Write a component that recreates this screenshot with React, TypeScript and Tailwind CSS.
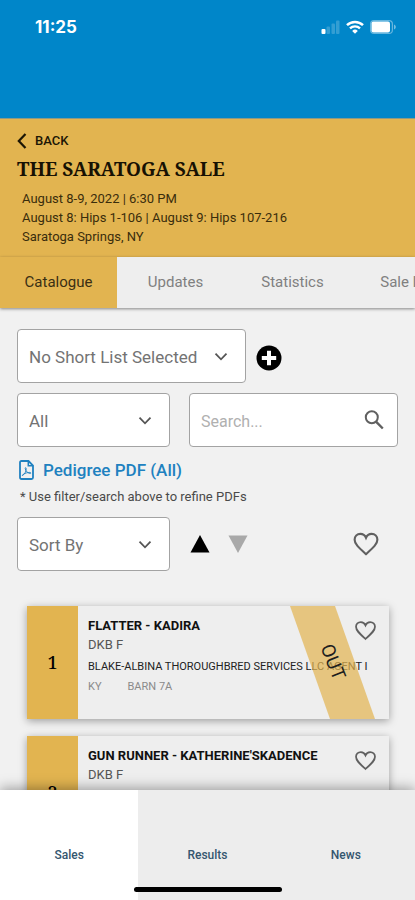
import type { ReactNode } from "react";

function Chevron() {
  return (
    <svg viewBox="0 0 14 14" aria-hidden="true" className="pointer-events-none absolute right-[17px] top-1/2 size-[14px] -translate-y-1/2">
      <path d="M1.500 4.700 7 10.300l5.500-5.600" fill="none" stroke="#555" strokeWidth="1.800" />
    </svg>
  );
}

function Heart({ className }: { className: string }) {
  return (
    <svg viewBox="0 0 24 24" aria-hidden="true" className={className}>
      <path
        fill="none"
        stroke="#606060"
        strokeWidth="1.700"
        d="M12 20.100C6.300 15 2.900 12.100 2.900 8.500 2.900 5.900 4.900 3.900 7.500 3.900c1.900 0 3.700 1.200 4.500 3.100.8-1.900 2.600-3.100 4.500-3.100 2.600 0 4.600 2 4.600 4.600 0 3.600-3.400 6.500-9.100 11.600z"
      />
    </svg>
  );
}

function SelectBox({ label, text, className }: { label: string; text: string; className: string }) {
  return (
    <div className={`relative h-[54px] rounded-[4px] border border-[#a3a3a3] bg-white ${className}`}>
      <select aria-label={label} className="h-full w-full appearance-none rounded-[4px] bg-transparent pl-[11px] pr-9 pt-[3px] text-[17px] text-[#737373] outline-none">
        <option>{text}</option>
      </select>
      <Chevron />
    </div>
  );
}

function StatusBar() {
  return (
    <div className="flex items-center justify-between pl-[35px] pr-[19px] pt-[17px] text-white">
      <span className="font-['Inter'] text-[17px] font-bold leading-5">11:25</span>
      <div className="flex items-center gap-[6px]">
        <svg viewBox="0 0 19 14" className="h-[14px] w-[19px]" aria-hidden="true">
          <rect x="0.500" y="9" width="4" height="5" rx="1" fill="#fff" />
          <rect x="5.500" y="6.500" width="3.500" height="7.500" rx="1" fill="#fff" opacity=".2" />
          <rect x="10.500" y="3.500" width="3.500" height="10.500" rx="1" fill="#fff" opacity=".2" />
          <rect x="15" y="0.500" width="3.500" height="13.500" rx="1" fill="#fff" opacity=".2" />
        </svg>
        <svg viewBox="0 0 18 14" className="h-[14px] w-[18px]" aria-hidden="true" fill="none" stroke="#fff">
          <path d="M1 5.200a11.400 11.400 0 0 1 16 0" strokeWidth="2.500" />
          <path d="M4 8.400a7.100 7.100 0 0 1 10 0" strokeWidth="2.300" />
          <path d="M9 13.800 6.200 10.900a4 4 0 0 1 5.600 0z" fill="#fff" stroke="none" />
        </svg>
        <svg viewBox="0 0 26 14" className="h-[14px] w-[26px]" aria-hidden="true">
          <rect x="0.600" y="0.600" width="21.800" height="12.800" rx="3.500" fill="none" stroke="#fff" strokeOpacity=".4" strokeWidth="1.200" />
          <rect x="1.500" y="1.500" width="18.500" height="11" rx="2" fill="#fff" />
          <path d="M24 4.500c1.200.5 1.800 1.500 1.800 2.500s-.6 2-1.800 2.500z" fill="#fff" opacity=".45" />
        </svg>
      </div>
    </div>
  );
}

const tabs = ["Catalogue", "Updates", "Statistics", "Sale Info"];

function Horse({ hip, name, kind, children }: { hip: string; name: string; kind: string; children?: ReactNode }) {
  return (
    <article className="relative flex h-[113px] shrink-0 bg-[#eeeeee] shadow-[0_2px_8px_rgba(0,0,0,0.35)]">
      <div className="flex w-[51px] shrink-0 items-center justify-center bg-[#e2b450] font-['Noto_Serif','DejaVu_Serif',serif] text-[18px] font-medium text-black">{hip}</div>
      <div className="min-w-0 flex-1 whitespace-nowrap pl-[10px] pt-[10px]">
        <h2 className="text-[13px] font-bold leading-5 text-[#111]">{name}</h2>
        <p className="text-[13px] leading-[18px] text-[#555]">{kind}</p>
        {children}
      </div>
      <button aria-label={`Add ${name} to favourites`} className="absolute right-[11px] top-[12px] z-10">
        <Heart className="size-[25px]" />
      </button>
    </article>
  );
}

export default function App() {
  return (
    <div className="flex h-screen flex-col overflow-hidden bg-[#f1f1f1] font-['Roboto',sans-serif]">
      <header className="h-[119px] shrink-0 border-b border-[#8d9a84] bg-[#0086c9]">
        <StatusBar />
      </header>

      <section className="h-[138px] shrink-0 bg-[#e2b450] px-[17px] pt-[12px] text-[#3a2d0c]">
        <button className="flex items-center gap-[8px] text-[13px] font-medium leading-5 text-[#1c1605]">
          <svg viewBox="0 0 10 16" className="h-[16px] w-[10px]" aria-hidden="true">
            <path d="M8.500 1 1.800 8l6.700 7" fill="none" stroke="#1c1605" strokeWidth="2.200" />
          </svg>
          BACK
        </button>
        <h1 className="pt-[4px] font-['Noto_Serif','Liberation_Serif',serif] text-[19px] font-bold leading-7 text-[#171103]">THE SARATOGA SALE</h1>
        <div className="pl-[5px] pt-[6px] text-[13px] leading-[19px]">
          <p>August 8-9, 2022 | 6:30 PM</p>
          <p>August 8: Hips 1-106 | August 9: Hips 107-216</p>
          <p>Saratoga Springs, NY</p>
        </div>
      </section>

      <nav className="relative z-10 flex h-[51px] shrink-0 overflow-x-clip bg-[#eeeeee] shadow-[0_1px_3px_rgba(0,0,0,0.45)]">
        {tabs.map((tab, i) => (
          <button
            key={tab}
            className={`w-[117px] shrink-0 text-[15px] ${i === 0 ? "bg-[#e2b450] text-[#3a2f14]" : "text-[#808080]"}`}
          >
            {tab}
          </button>
        ))}
      </nav>

      <main className="min-h-0 flex-1 overflow-hidden px-[17px] pt-[21px]">
        <div className="flex items-center gap-[10px]">
          <SelectBox label="Short list" text="No Short List Selected" className="w-[229px]" />
          <button aria-label="Add short list" className="pt-[4px]">
            <svg viewBox="0 0 26 26" className="size-[26px]" aria-hidden="true">
              <circle cx="13" cy="13" r="12.500" fill="#000" />
              <path d="M13 5.800v14.400M5.800 13h14.400" stroke="#fff" strokeWidth="4" />
            </svg>
          </button>
        </div>

        <div className="flex gap-[19px] pt-[10px]">
          <SelectBox label="Filter" text="All" className="w-[153px]" />
          <div className="flex h-[54px] min-w-0 flex-1 items-center rounded-[4px] border border-[#a3a3a3] bg-white pl-[11px] pr-[13px]">
            <input aria-label="Search" placeholder="Search..." className="min-w-0 flex-1 bg-transparent pt-[3px] text-[16px] text-[#555] outline-none placeholder:text-[#b0b0b0]" />
            <svg viewBox="0 0 20 20" className="size-[20px] shrink-0" aria-hidden="true" fill="none" stroke="#606060">
              <circle cx="7.800" cy="7.300" r="6" strokeWidth="2" />
              <path d="m12 11.600 6.800 6.900" strokeWidth="2.400" />
            </svg>
          </div>
        </div>

        <a href="#pedigree" className="flex w-fit items-center gap-[9px] pl-[2px] pt-[10px] text-[17px] font-medium leading-[26px] text-[#2081c0]">
          <svg viewBox="0 0 15 20" className="h-[20px] w-[15px]" aria-hidden="true" fill="none" stroke="#2081c0">
            <path d="M1 2.500Q1 1 2.500 1H9.500L14 5.500V17.500Q14 19 12.500 19H2.500Q1 19 1 17.500Z" strokeWidth="1.800" />
            <path d="M9.300 1V5.800H14" strokeWidth="1.500" />
            <path d="M3.500 15.500C5.500 14.500 7.500 11 7.200 8.300c-.1-1-1.200-.8-1 .3.400 2.500 2.500 4.600 5 4.900 1 0 .8-1.100-.3-1.100-2.400 0-5 .8-7 2.200-1 .8-.9 1.200-.4.900Z" strokeWidth=".9" />
          </svg>
          Pedigree PDF (All)
        </a>
        <p className="pl-[3px] pt-[4px] text-[13px] leading-5 text-[#4a4a4a]">* Use filter/search above to refine PDFs</p>

        <div className="flex items-center pt-[10px]">
          <SelectBox label="Sort by" text="Sort By" className="w-[153px]" />
          <button aria-label="Sort ascending" className="ml-[20px]">
            <svg viewBox="0 0 20 18" className="h-[18px] w-[20px]" aria-hidden="true"><path d="M10 0 19.500 17.500H.5Z" fill="#000" /></svg>
          </button>
          <button aria-label="Sort descending" className="ml-[18px]">
            <svg viewBox="0 0 20 18" className="h-[18px] w-[20px]" aria-hidden="true"><path d="M10 18 .5.500H19.500Z" fill="#a9a9a9" /></svg>
          </button>
          <button aria-label="Show favourites" className="ml-auto mr-[17px]">
            <Heart className="size-[30px]" />
          </button>
        </div>

        <div className="flex flex-col gap-[17px] pl-[10px] pr-[9px] pt-[35px]">
          <Horse hip="1" name="FLATTER - KADIRA" kind="DKB F">
            <p className="pt-[4px] text-[11px] leading-[18px] text-[#222]">BLAKE-ALBINA THOROUGHBRED SERVICES LLC AGENT I</p>
            <p className="flex gap-[26px] pt-[2px] text-[11px] leading-[18px] text-[#8a8a8a]">
              <span>KY</span>
              <span>BARN 7A</span>
            </p>
            <div className="absolute inset-y-0 right-[14px] flex w-[85px] items-center justify-center bg-[#e2b450]/70 [clip-path:polygon(0_0,45px_0,100%_100%,40px_100%)]">
              <span className="rotate-[68deg] text-[19px] text-[#1e1e1e]">OUT</span>
            </div>
          </Horse>
          <Horse hip="2" name="GUN RUNNER - KATHERINE'SKADENCE" kind="DKB F" />
        </div>
      </main>

      <footer className="relative z-20 grid h-[110px] shrink-0 grid-cols-3 bg-[#ededed] text-[12px] font-medium text-[#34566f] shadow-[0_-2px_12px_rgba(0,0,0,0.35)]">
        <button className="bg-white pt-[19px]">Sales</button>
        <button className="pt-[19px]">Results</button>
        <button className="pt-[19px]">News</button>
        <div className="absolute bottom-[8px] left-1/2 h-[5px] w-[148px] -translate-x-1/2 rounded-full bg-black" />
      </footer>
    </div>
  );
}
